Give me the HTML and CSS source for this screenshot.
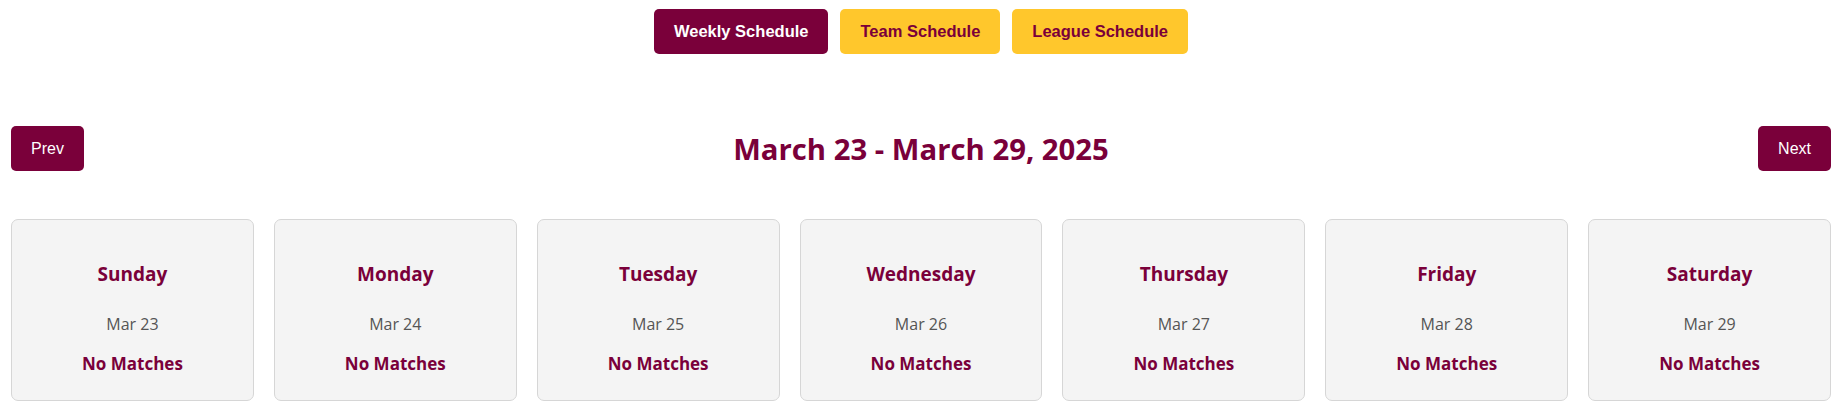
FILE: index.html
```html
<!DOCTYPE html>
<html lang="en">
<head>
<meta charset="utf-8">
<title>Weekly Schedule</title>
<link rel="stylesheet" href="styles.css">
</head>
<body>
<div class="page">
  <nav class="tabs">
    <button class="tab tab-active">Weekly Schedule</button>
    <button class="tab">Team Schedule</button>
    <button class="tab">League Schedule</button>
  </nav>
  <header class="week-header">
    <button class="nav-btn">Prev</button>
    <h1 class="week-title">March 23 - March 29, 2025</h1>
    <button class="nav-btn">Next</button>
  </header>
  <section class="days">
    <div class="day-card"><h3 class="day-name">Sunday</h3><p class="day-date">Mar 23</p><p class="day-matches">No Matches</p></div>
    <div class="day-card"><h3 class="day-name">Monday</h3><p class="day-date">Mar 24</p><p class="day-matches">No Matches</p></div>
    <div class="day-card"><h3 class="day-name">Tuesday</h3><p class="day-date">Mar 25</p><p class="day-matches">No Matches</p></div>
    <div class="day-card"><h3 class="day-name">Wednesday</h3><p class="day-date">Mar 26</p><p class="day-matches">No Matches</p></div>
    <div class="day-card"><h3 class="day-name">Thursday</h3><p class="day-date">Mar 27</p><p class="day-matches">No Matches</p></div>
    <div class="day-card"><h3 class="day-name">Friday</h3><p class="day-date">Mar 28</p><p class="day-matches">No Matches</p></div>
    <div class="day-card"><h3 class="day-name">Saturday</h3><p class="day-date">Mar 29</p><p class="day-matches">No Matches</p></div>
  </section>
</div>
</body>
</html>
```
FILE: styles.css
```css
* { box-sizing: border-box; }
html, body { margin: 0; padding: 0; background: #fff; }
body { font-family: "Open Sans", "Noto Sans", sans-serif; }

.page {
  padding: 9px 17px 0 11px;
}

.tabs {
  display: flex;
  justify-content: center;
  gap: 12px;
}

.tab {
  font-family: "Liberation Sans", Arial, sans-serif;
  font-size: 16.5px;
  font-weight: bold;
  line-height: 19px;
  padding: 13px 20px;
  border: none;
  border-radius: 5px;
  background: #ffc72c;
  color: #7a003a;
  cursor: pointer;
}

.tab-active {
  background: #7a003a;
  color: #fff;
}

.week-header {
  margin-top: 72px;
  display: flex;
  justify-content: space-between;
  align-items: center;
}

.nav-btn {
  font-family: "Liberation Sans", Arial, sans-serif;
  font-size: 16px;
  line-height: 19px;
  padding: 13px 20px;
  border: none;
  border-radius: 5px;
  background: #7a003a;
  color: #fff;
  cursor: pointer;
}

.week-title {
  margin: 0;
  font-size: 29.3px;
  font-weight: 700;
  color: #7a003a;
  line-height: 40px;
}

.days {
  margin-top: 48px;
  display: grid;
  grid-template-columns: repeat(7, 1fr);
  gap: 20px;
}

.day-card {
  height: 182px;
  background: #f4f4f4;
  border: 1px solid #d6d6d6;
  border-radius: 7px;
  padding: 41px 10px 0;
  text-align: center;
}

.day-name {
  margin: 0;
  font-size: 19px;
  font-weight: 700;
  line-height: 26px;
  color: #7a003a;
}

.day-date {
  margin: 25px 0 0;
  font-size: 16px;
  font-weight: 400;
  line-height: 24px;
  color: #555;
}

.day-matches {
  margin: 16px 0 0;
  font-size: 17px;
  font-weight: 700;
  line-height: 24px;
  color: #7a003a;
}
```
